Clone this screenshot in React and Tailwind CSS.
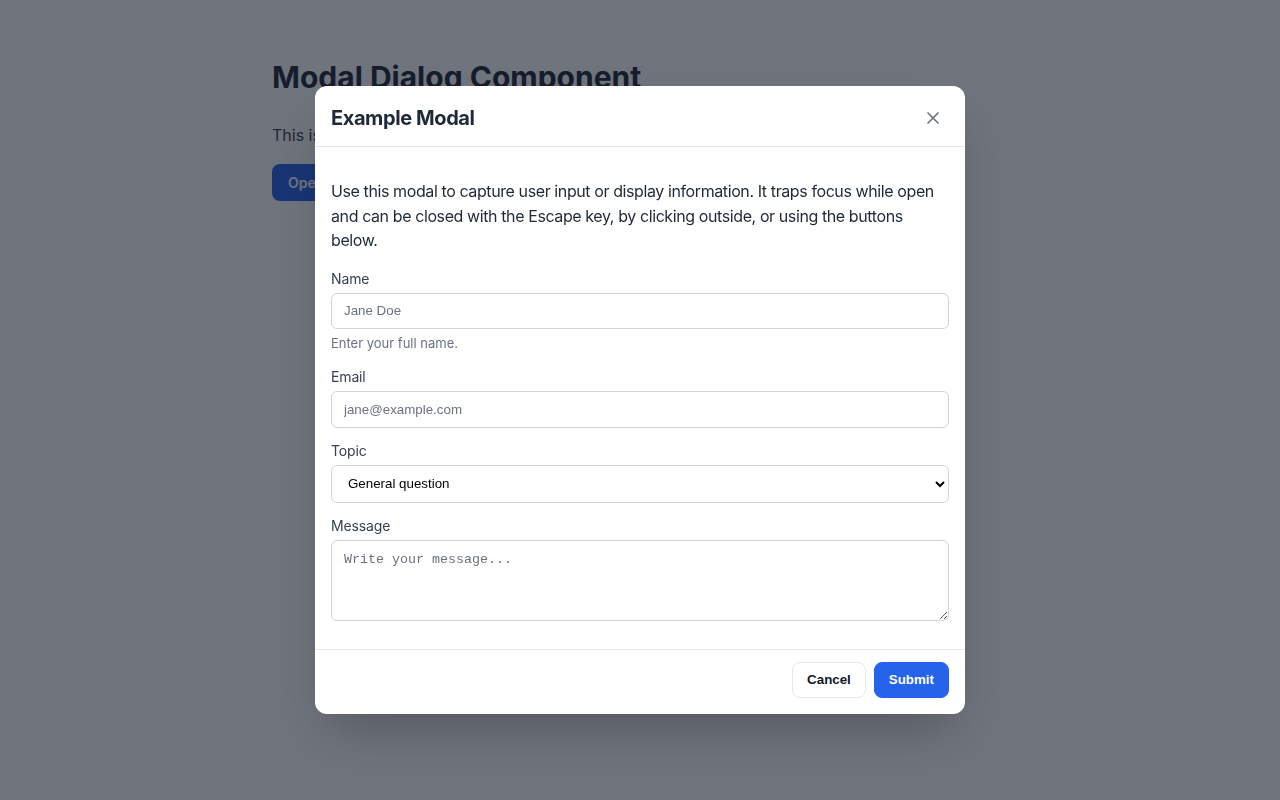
import { X } from "lucide-react";

const fieldCls =
  "block w-full rounded-md border border-[#d1d5db] bg-white px-3 text-[13.33px] text-[#111827] placeholder:text-[#6b7280] font-['Liberation_Sans',Arial,sans-serif]";

function Field({ label, children, hint, className = "mb-[13px]" }) {
  return (
    <div className={className}>
      <label className="mb-1 block text-sm leading-5 tracking-[-0.01em] text-[#374151]">{label}</label>
      {children}
      {hint && <p className="mt-1 text-[13px] leading-5 text-[#6b7280]">{hint}</p>}
    </div>
  );
}

export default function App() {
  return (
    <div className="min-h-screen bg-white font-['Inter','Noto_Sans',sans-serif] text-[#1f2937]">
      <div className="mx-auto max-w-3xl px-4 pt-[59px]">
        <h1 className="text-3xl font-bold leading-9 text-[#1f2937]">Modal Dialog Component</h1>
        <p className="mt-7 text-base leading-6 text-[#374151]">
          This is a simple example of an accessible modal dialog built with React.
        </p>
        <button className="mt-[17px] h-[37px] rounded-lg bg-[#2563eb] px-4 text-sm font-semibold text-white">
          Open Modal
        </button>
      </div>

      <div className="fixed inset-0 flex items-center justify-center bg-[rgba(17,24,39,0.6)]">
        <div className="w-[650px] overflow-hidden rounded-xl bg-white shadow-2xl">
          <div className="flex items-center justify-between border-b border-[#e5e7eb] px-4 pb-[14px] pt-[18px]">
            <h2 className="text-xl font-bold leading-7 tracking-[-0.02em] text-[#1f2937]">Example Modal</h2>
            <button className="flex h-7 w-8 items-center justify-center text-[#6b7280]">
              <X size={20} strokeWidth={2} />
            </button>
          </div>

          <div className="p-4">
            <p className="mb-4 mt-4 text-base leading-[24.5px] tracking-[-0.025em] text-[#1f2937]">
              Use this modal to capture user input or display information. It traps focus while open
              and can be closed with the Escape key, by clicking outside, or using the buttons
              below.
            </p>

            <Field label="Name" hint="Enter your full name." className="mb-[14px]">
              <input className={`${fieldCls} h-9`} placeholder="Jane Doe" />
            </Field>
            <Field label="Email">
              <input className={`${fieldCls} h-[37px]`} placeholder="jane@example.com" />
            </Field>
            <Field label="Topic">
              <select className={`${fieldCls} h-[38px] text-black`} defaultValue="general">
                <option value="general">General question</option>
                <option value="support">Support</option>
                <option value="feedback">Feedback</option>
              </select>
            </Field>
            <Field label="Message" className="mb-3">
              <textarea
                className="mt-[1px] block h-[81px] w-full rounded-md border border-[#d1d5db] bg-white px-3 pb-2 pt-[9px] font-['Liberation_Mono','DejaVu_Sans_Mono',monospace] text-[13.33px] text-[#111827] placeholder:text-[#6b7280]"
                placeholder="Write your message..."
              />
            </Field>
          </div>

          <div className="flex justify-end gap-2 border-t border-[#e5e7eb] px-4 pb-4 pt-3">
            <button className="h-9 rounded-lg border border-[#e5e7eb] bg-white px-[14px] font-['Liberation_Sans',Arial,sans-serif] text-[13.33px] font-bold text-[#111827]">
              Cancel
            </button>
            <button className="h-9 rounded-lg border border-[#2563eb] bg-[#2563eb] px-[14px] font-['Liberation_Sans',Arial,sans-serif] text-[13.33px] font-bold text-white">
              Submit
            </button>
          </div>
        </div>
      </div>
    </div>
  );
}
